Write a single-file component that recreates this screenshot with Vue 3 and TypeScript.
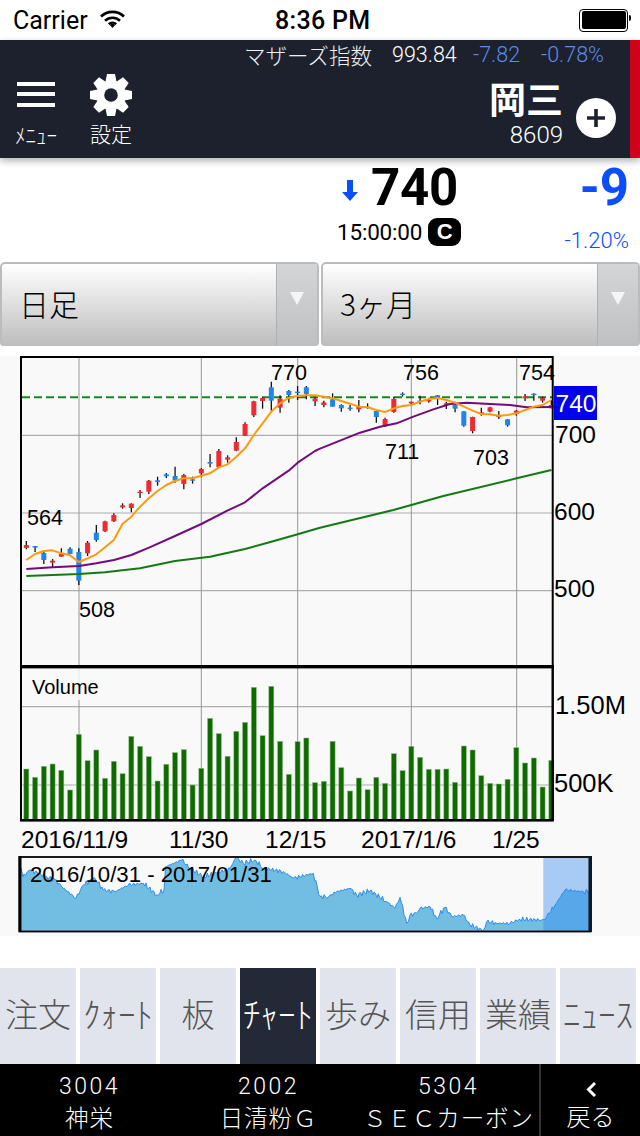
<script setup lang="ts">
const tabs = [
  { t: '注文', half: false }, { t: 'ｸｫｰﾄ', half: true }, { t: '板', half: false }, { t: 'ﾁｬｰﾄ', half: true },
  { t: '歩み', half: false }, { t: '信用', half: false }, { t: '業績', half: false }, { t: 'ﾆｭｰｽ', half: true },
]
const peers = [
  { code: '3004', name: '神栄' },
  { code: '2002', name: '日清粉Ｇ' },
  { code: '5304', name: 'ＳＥＣカーボン' },
]

const px = (v: number) => (v / 3).toFixed(2)
const py = (v: number) => (v / 3 - 6).toFixed(2)
const vy = (v: number) => (v / 3 + 304).toFixed(2)
const cx = (i: number) => 26.33 + 8.75 * i
const poly = (p: number[][], fy: (v: number) => string = py) =>
  p.map(([x, y]) => `${px(x)},${fy(y)}`).join(' ')

// high, low, bodyTop, bodyBottom, r(ed)/b(lue)
const raw: [number, number, number, number, string][] = [
  [573, 598, 585, 594, 'r'], [588, 606, 588, 593, 'b'], [600, 642, 609, 630, 'b'], [627, 652, 632, 638, 'r'],
  [595, 620, 612, 620, 'r'], [592, 612, 596, 612, 'b'], [595, 705, 606, 692, 'b'], [573, 618, 578, 610, 'r'],
  [525, 575, 548, 570, 'b'], [512, 546, 514, 544, 'r'], [490, 516, 495, 514, 'r'], [460, 476, 466, 472, 'r'],
  [460, 487, 461, 474, 'r'], [420, 444, 425, 429, 'r'], [390, 432, 392, 425, 'r'], [380, 407, 391, 396, 'b'],
  [369, 384, 373, 379, 'b'], [350, 398, 378, 392, 'b'], [372, 418, 375, 402, 'r'], [380, 401, 388, 392, 'b'],
  [354, 382, 357, 370, 'r'], [312, 352, 336, 341, 'b'], [297, 352, 303, 351, 'r'], [316, 338, 322, 329, 'r'],
  [262, 304, 276, 302, 'r'], [217, 258, 222, 257, 'r'], [152, 201, 154, 196, 'r'], [142, 176, 144, 153, 'r'],
  [95, 182, 112, 152, 'b'], [136, 188, 146, 173, 'r'], [120, 158, 123, 135, 'b'], [108, 150, 125, 128, 'b'],
  [108, 148, 112, 132, 'b'], [140, 168, 146, 154, 'r'], [152, 172, 157, 165, 'r'], [130, 170, 148, 170, 'b'],
  [163, 185, 165, 175, 'b'], [165, 182, 173, 176, 'b'], [150, 187, 170, 178, 'r'], [160, 176, 170, 172, 'r'],
  [183, 218, 183, 201, 'b'], [203, 231, 207, 228, 'r'], [140, 188, 147, 186, 'r'], [127, 140, 131, 133, 'b'],
  [155, 168, 155, 160, 'r'], [137, 163, 152, 155, 'b'], [143, 158, 150, 152, 'r'], [135, 165, 136, 146, 'b'],
  [155, 177, 160, 165, 'r'], [155, 187, 164, 176, 'b'], [183, 230, 184, 227, 'b'], [200, 250, 201, 243, 'r'],
  [173, 197, 187, 190, 'r'], [170, 187, 172, 185, 'r'], [183, 207, 197, 200, 'r'], [207, 230, 208, 226, 'b'],
  [180, 197, 182, 192, 'r'], [132, 153, 139, 145, 'r'], [130, 152, 131, 135, 'b'], [140, 158, 144, 152, 'r'],
  [150, 175, 165, 175, 'r'],
]
const candles = raw.map(([hi, lo, top, bot, c], i) => ({
  x: cx(i),
  hi: +py(hi),
  lo: +py(lo),
  top: +py(top),
  h: Math.max((bot - top) / 3, 1.4),
  fill: c === 'r' ? '#ee2a33' : '#1f84ee',
}))

const orangeY = [630, 612, 603, 601, 610, 616, 636, 625, 613, 592, 570, 521, 500, 470, 445, 423, 405, 393, 385, 385, 377, 370, 352, 343, 320, 295, 255, 220, 185, 160, 143, 138, 136, 136, 140, 145, 153, 161, 170, 172, 180, 186, 175, 168, 165, 155, 147, 144, 150, 158, 170, 182, 192, 193, 197, 195, 190, 180, 170, 165, 150]
const orange = orangeY.map((y, i) => `${cx(i).toFixed(2)},${py(y)}`).join(' ')
const purple = poly([[79, 657], [158, 652], [237, 648], [289, 640], [342, 630], [394, 615], [447, 593], [525, 558], [604, 522], [682, 482], [735, 457], [788, 415], [866, 362], [893, 338], [945, 303], [960, 296], [1020, 272], [1080, 248], [1140, 230], [1190, 220], [1240, 200], [1300, 178], [1350, 162], [1400, 158], [1470, 162], [1530, 165], [1580, 172], [1654, 171]])
const green = poly([[79, 678], [237, 672], [315, 667], [420, 655], [525, 633], [630, 620], [735, 597], [814, 575], [893, 553], [960, 533], [1180, 480], [1234, 465], [1330, 438], [1550, 385], [1654, 360]])

const volTops = [327, 352, 319, 312, 331, 390, 223, 302, 270, 355, 304, 341, 229, 259, 290, 363, 313, 278, 269, 375, 325, 175, 221, 289, 214, 187, 82, 227, 79, 244, 343, 245, 234, 368, 364, 244, 323, 393, 354, 389, 352, 370, 281, 332, 259, 292, 328, 328, 327, 367, 258, 270, 347, 370, 372, 358, 263, 309, 294, 381, 301]
const vols = volTops.map((t, i) => ({ x: cx(i) - 2.5, y: +vy(t), h: 820 - 356 - +vy(t) }))

// overview line: anchor points with a small deterministic wobble between them
const anchors = [[64, 625], [68, 650], [90, 630], [140, 650], [165, 660], [185, 680], [228, 715], [250, 675], [285, 655], [310, 690], [345, 695], [385, 675], [430, 670], [470, 705], [492, 690], [497, 620], [545, 600], [570, 625], [610, 650], [650, 640], [690, 625], [708, 592], [730, 610], [765, 600], [790, 625], [850, 635], [880, 655], [940, 640], [960, 710], [985, 710], [1010, 695], [1050, 685], [1070, 705], [1110, 692], [1160, 725], [1185, 745], [1200, 712], [1220, 790], [1230, 765], [1250, 760], [1260, 745], [1290, 740], [1310, 775], [1335, 742], [1355, 770], [1390, 765], [1410, 795], [1450, 812], [1460, 785], [1490, 790], [1530, 790], [1560, 778], [1625, 780], [1640, 770], [1665, 735], [1695, 690], [1750, 695], [1768, 695]]
const overview: number[][] = []
anchors.forEach((a, i) => {
  overview.push(a)
  const b = anchors[i + 1]
  if (!b) return
  const n = Math.floor((b[0] - a[0]) / 4)
  for (let k = 1; k < n; k++) {
    const t = k / n
    const w = Math.sin(i * 3.7 + k * 2.3) * 5 + Math.sin(i * 1.3 + k * 4.1) * 3.5
    overview.push([a[0] + (b[0] - a[0]) * t, Math.min(812, a[1] + (b[1] - a[1]) * t + w)])
  }
})
const overLine = poly(overview, vy)
const overFill = `${px(64)},${vy(813)} ${overLine} ${px(1768)},${vy(813)}`

const gearTeeth = [0, 45, 90, 135, 180, 225, 270, 315]
</script>

<template>
  <div class="screen">
    <div class="status">
      <div class="status-left">
        <span>Carrier</span>
        <svg class="wifi" width="25" height="18" viewBox="0 0 25 18" aria-hidden="true">
          <path d="M1 6.5a16.5 16.5 0 0 1 23 0M5 10.8a10.8 10.8 0 0 1 15 0M8.8 14.2a5.4 5.4 0 0 1 7.4 0" fill="none" stroke="#000" stroke-width="2.6" />
          <path d="M12.5 18l-2.6-3a3.6 3.6 0 0 1 5.2 0z" />
        </svg>
      </div>
      <span class="clock">8:36 PM</span>
      <div class="battery"><i></i></div>
    </div>

    <header class="head">
      <div class="head-main">
        <div class="index-row">
          <span class="index-name">マザーズ指数</span>
          <span class="index-val">993.84</span>
          <span class="index-chg">-7.82</span>
          <span class="index-pct">-0.78%</span>
        </div>
        <div class="nav-row">
          <button class="nav-btn menu">
            <span class="burger"><i></i><i></i><i></i></span>
            <span class="nav-label">ﾒﾆｭｰ</span>
          </button>
          <button class="nav-btn gear">
            <svg width="42" height="42" viewBox="-21 -21 42 42" aria-hidden="true">
              <path v-for="a in gearTeeth" :key="a" d="M-4 -21H4L6 -11H-6Z" fill="#fff" :transform="`rotate(${a})`" />
              <circle r="14.5" fill="#fff" />
              <circle r="6.8" fill="#1d212d" />
            </svg>
            <span class="nav-label">設定</span>
          </button>
          <div class="stock">
            <span class="stock-name">岡三</span>
            <span class="stock-code">8609</span>
          </div>
          <div class="plus">
            <svg width="20" height="20" viewBox="0 0 20 20" aria-hidden="true"><path d="M10 1v18M1 10h18" stroke="#1d212d" stroke-width="3.6" /></svg>
          </div>
        </div>
      </div>
      <div class="red-tag"></div>
    </header>

    <section class="quote">
      <div class="quote-mid">
        <div class="price-line">
          <svg class="down" width="16" height="21" viewBox="0 0 16 21" aria-hidden="true"><path d="M5 0h6v12h5l-8 9-8-9h5z" fill="#0b4dff" /></svg>
          <span class="price">740</span>
        </div>
        <div class="time-line"><span class="time">15:00:00</span><span class="close-badge">C</span></div>
      </div>
      <div class="quote-right">
        <span class="change">-9</span>
        <span class="pct">-1.20%</span>
      </div>
    </section>

    <section class="selectors">
      <div class="select"><span class="select-text">日足</span><span class="select-arrow"><i></i></span></div>
      <div class="select"><span class="select-text">3ヶ月</span><span class="select-arrow"><i></i></span></div>
    </section>

    <section class="chart-wrap">
      <svg class="chart" width="640" height="580" viewBox="0 0 640 580">
        <!-- price grid -->
        <g stroke="#aeaeae" stroke-width="1.2">
          <line x1="21" x2="552" y1="79.3" y2="79.3" />
          <line x1="21" x2="552" y1="157" y2="157" />
          <line x1="21" x2="552" y1="234.7" y2="234.7" />
          <line x1="21" x2="552" y1="350.7" y2="350.7" />
          <line x1="21" x2="552" y1="429" y2="429" />
        </g>
        <g stroke="#979797" stroke-width="1">
          <line v-for="x in [79, 201.3, 297.7, 411.3, 516.7]" :key="x" :x1="x" :x2="x" y1="1" y2="464" />
        </g>
        <line x1="22" x2="552" y1="41.3" y2="41.3" stroke="#18861c" stroke-width="2" stroke-dasharray="8 4" />

        <!-- candles -->
        <g v-for="(c, i) in candles" :key="i">
          <line :x1="c.x" :x2="c.x" :y1="c.hi" :y2="c.lo" stroke="#111" stroke-width="1.3" />
          <rect :x="c.x - 2.5" :y="c.top" width="5" :height="c.h" :fill="c.fill" />
        </g>
        <polyline :points="green" fill="none" stroke="#127a12" stroke-width="2" stroke-linejoin="round" />
        <polyline :points="purple" fill="none" stroke="#760a7c" stroke-width="2" stroke-linejoin="round" />
        <polyline :points="orange" fill="none" stroke="#ff9a0d" stroke-width="2" stroke-linejoin="round" />

        <!-- price labels -->
        <g class="lab">
          <text x="27" y="169">564</text>
          <text x="79" y="261">508</text>
          <text x="271" y="24">770</text>
          <text x="403" y="24">756</text>
          <text x="519" y="24">754</text>
          <text x="385" y="103">711</text>
          <text x="473" y="109">703</text>
        </g>

        <!-- volume -->
        <rect x="24" y="312" width="82" height="32" fill="#f9f9f9" opacity=".85" />
        <text class="vol-title" x="32" y="338">Volume</text>
        <rect v-for="(v, i) in vols" :key="'v' + i" :x="v.x" :y="v.y" width="5" :height="v.h" fill="#0f6b00" stroke="#8dbb85" stroke-width=".5" />

        <!-- frames -->
        <rect x="21" y="1" width="531.7" height="463" fill="none" stroke="#000" stroke-width="2" />
        <rect x="21" y="310" width="531.7" height="154.6" fill="none" stroke="#000" stroke-width="2" />
        <rect x="20" y="309" width="534" height="3.4" fill="#000" />

        <!-- axis -->
        <rect x="554" y="30" width="43" height="34" fill="#0000ef" />
        <text class="axis" x="555.5" y="56" fill="#fff">740</text>
        <text class="axis" x="555" y="87" fill="#000">700</text>
        <text class="axis" x="554" y="164" fill="#000">600</text>
        <text class="axis" x="554" y="241" fill="#000">500</text>
        <text class="axis-wide" x="555" y="358" fill="#000">1.50M</text>
        <text class="axis-wide" x="554" y="436" fill="#000">500K</text>

        <!-- dates -->
        <text class="axis" x="21" y="492">2016/11/9</text>
        <text class="axis" x="169" y="492">11/30</text>
        <text class="axis" x="265" y="492">12/15</text>
        <text class="axis" x="361" y="492">2017/1/6</text>
        <text class="axis" x="492" y="492">1/25</text>

        <!-- overview -->
        <polygon :points="overFill" fill="#72bee3" />
        <polyline :points="overLine" fill="none" stroke="#2e8bea" stroke-width="1" />
        <rect x="543.3" y="502" width="45" height="73" fill="#2f86f0" fill-opacity=".4" />
        <rect x="19.5" y="501" width="571" height="74.5" fill="none" stroke="#000" stroke-width="1.8" />
        <rect x="18.5" y="500" width="3" height="76" fill="#000" />
        <rect x="588.4" y="500" width="3.6" height="76" fill="#061a30" />
        <text class="over-title" x="30" y="526">2016/10/31 - 2017/01/31</text>
      </svg>
    </section>

    <nav class="tabs">
      <div v-for="(item, i) in tabs" :key="item.t" class="tab" :class="{ active: i === 3, half: item.half }">{{ item.t }}</div>
    </nav>

    <footer class="foot">
      <div v-for="p in peers" :key="p.code" class="peer">
        <span class="peer-code">{{ p.code }}</span>
        <span class="peer-name">{{ p.name }}</span>
      </div>
      <div class="back">
        <svg width="12" height="17" viewBox="0 0 12 17" aria-hidden="true"><path d="M10 2L3.5 8.5 10 15" fill="none" stroke="#fff" stroke-width="3" /></svg>
        <span class="back-text">戻る</span>
      </div>
    </footer>
  </div>
</template>

<style scoped>
.screen {
  width: 640px;
  height: 1136px;
  display: flex;
  flex-direction: column;
  background: #fff;
  overflow: hidden;
  font-family: Roboto, "Noto Sans CJK JP", sans-serif;
  color: #000;
}
i { display: block; }

.status {
  height: 40px;
  flex: none;
  display: flex;
  align-items: center;
  justify-content: space-between;
  padding: 0 12px 0 13px;
  position: relative;
  font-size: 25px;
}
.status-left { display: flex; align-items: center; gap: 12px; }
.wifi { margin-top: -2px; }
.clock {
  position: absolute;
  left: 275px;
  font-weight: 500;
  font-size: 25px;
  letter-spacing: .3px;
}
.battery {
  width: 44px;
  height: 18px;
  border: 1px solid #000;
  border-radius: 4px;
  padding: 1.5px;
  position: relative;
}
.battery i { height: 100%; background: #000; border-radius: 2px; }
.battery::after {
  content: "";
  position: absolute;
  right: -4px;
  top: 5px;
  width: 2.5px;
  height: 6px;
  background: #000;
  border-radius: 0 2px 2px 0;
}

.head {
  height: 118px;
  flex: none;
  display: flex;
  background: #1d212d;
  box-shadow: 0 3px 7px rgba(0, 0, 0, .3);
  position: relative;
  z-index: 1;
  color: #fff;
}
.head-main { flex: 1; display: flex; flex-direction: column; }
.red-tag { width: 10px; background: #d0021b; }
.index-row {
  height: 28px;
  display: flex;
  align-items: center;
  padding-left: 244px;
  font-size: 21.5px;
  white-space: nowrap;
  color: #eee;
}
.index-name { width: 148px; font-family: "Noto Sans CJK JP", sans-serif; font-weight: 300; font-size: 21.5px; }
.index-val { width: 81px; font-weight: 300; color: #fff; }
.index-chg { width: 68px; color: #5a8cec; font-weight: 300; }
.index-pct { color: #5a8cec; font-weight: 300; }
.nav-row { flex: 1; display: flex; position: relative; }
.nav-btn {
  border: 0;
  padding: 0;
  background: none;
  color: #fff;
  display: flex;
  flex-direction: column;
  align-items: center;
  font-family: "Noto Sans CJK JP", sans-serif;
}
.menu { width: 44px; margin-left: 14px; padding-top: 14px; }
.burger { width: 38px; display: flex; flex-direction: column; gap: 6px; margin-bottom: 14px; }
.burger i { height: 4px; background: #fff; }
.burger i:last-child { margin-top: 1px; }
.gear { width: 44px; margin-left: 31px; padding-top: 6px; }
.nav-label { font-size: 21px; line-height: 24px; font-weight: 300; white-space: nowrap; }
.gear .nav-label { margin-top: 5px; }
.menu .nav-label { margin-top: 1px; }
.stock {
  margin-left: auto;
  margin-right: 67px;
  display: flex;
  flex-direction: column;
  align-items: flex-end;
}
.stock-name {
  font-family: "Noto Sans CJK JP", sans-serif;
  font-size: 37px;
  line-height: 36px;
  font-weight: 700;
  margin-top: 12px;
}
.stock-code { font-size: 24px; line-height: 28px; margin-top: 5px; font-weight: 300; }
.plus {
  position: absolute;
  left: 576px;
  top: 30px;
  width: 40px;
  height: 40px;
  border-radius: 50%;
  background: #fff;
  display: flex;
  align-items: center;
  justify-content: center;
}

.quote {
  height: 104px;
  flex: none;
  display: flex;
  justify-content: flex-end;
  padding-right: 11px;
}
.quote-mid { width: 122px; margin-right: 99px; margin-left: auto; }
.price-line { display: flex; align-items: center; height: 60px; }
.down { margin-left: 4px; margin-right: 13px; margin-top: 4px; }
.price { font-size: 51px; font-weight: 700; line-height: 60px; letter-spacing: -.3px; }
.time-line { display: flex; align-items: center; gap: 6px; margin-left: -1px; width: 135px; }
.time { font-size: 22.5px; letter-spacing: -.2px; white-space: nowrap; }
.close-badge {
  width: 33px;
  height: 28px;
  border-radius: 9px;
  background: #000;
  color: #fff;
  font-weight: 700;
  font-family: "Liberation Sans", sans-serif;
  font-size: 22px;
  line-height: 28px;
  text-align: center;
}
.quote-right { display: flex; flex-direction: column; align-items: flex-end; width: 70px; }
.change { font-size: 51px; font-weight: 700; line-height: 60px; color: #0b4dff; }
.pct { font-size: 22px; font-weight: 300; color: #0b4dff; margin-top: 10px; white-space: nowrap; }

.selectors {
  height: 84px;
  flex: none;
  display: grid;
  grid-template-columns: 319px 319px;
  gap: 2px;
  margin-bottom: 10px;
}
.select {
  border: 2px solid #bcbcbc;
  border-bottom: 0;
  border-radius: 5px 5px 4px 4px;
  background: linear-gradient(#fff, #e8e8e8 35%, #bdbdbd);
  display: flex;
  justify-content: space-between;
}
.select-text {
  font-family: "Noto Sans CJK JP", sans-serif;
  font-weight: 300;
  font-size: 30px;
  line-height: 78px;
  padding-left: 17px;
}
.select-arrow {
  width: 40px;
  background: linear-gradient(#d4d5d6, #bfc0c1);
  border-left: 1px solid #b0b0b0;
  display: flex;
  justify-content: center;
  padding-top: 28px;
}
.select-arrow i {
  width: 0;
  height: 0;
  border-left: 7.5px solid transparent;
  border-right: 7.5px solid transparent;
  border-top: 13px solid #f4f5f7;
}

.chart-wrap { height: 580px; flex: none; background: #f9f9f9; margin-bottom: 32px; }
.chart { display: block; font-family: "Liberation Sans", sans-serif; }
.lab text { font-size: 21.5px; }
.vol-title { font-size: 20px; }
.axis { font-size: 24.5px; }
.axis-wide { font-size: 25.5px; }
.over-title { font-size: 22.2px; }

.tabs {
  height: 96px;
  flex: none;
  display: grid;
  grid-template-columns: repeat(8, 76px);
  gap: 4px;
}
.tab {
  background: #e1e4ec;
  color: #555;
  font-family: "Noto Sans CJK JP", sans-serif;
  font-weight: 300;
  font-size: 33px;
  line-height: 90px;
  text-align: center;
  white-space: nowrap;
  overflow: hidden;
}
.tab.half { font-size: 35px; }
.tab.active { background: #232936; color: #fff; }

.foot {
  flex: 1;
  display: grid;
  grid-template-columns: 179px 179px 181px 1fr;
  background: #000;
  color: #fff;
}
.peer { display: flex; flex-direction: column; align-items: center; padding-top: 9px; }
.peer-code { font-size: 23px; line-height: 27px; letter-spacing: 2.5px; font-weight: 300; color: #fff; }
.peer-name {
  font-family: "Noto Sans CJK JP", sans-serif;
  font-weight: 300;
  font-size: 23.5px;
  line-height: 28px;
  margin-top: 3px;
  white-space: nowrap;
  letter-spacing: .9px;
}
.back {
  border-left: 2px solid #333;
  display: flex;
  flex-direction: column;
  align-items: center;
  padding-top: 17px;
}
.back-text {
  font-family: "Noto Sans CJK JP", sans-serif;
  font-weight: 300;
  font-size: 24px;
  line-height: 30px;
  margin-top: 3px;
}
</style>
